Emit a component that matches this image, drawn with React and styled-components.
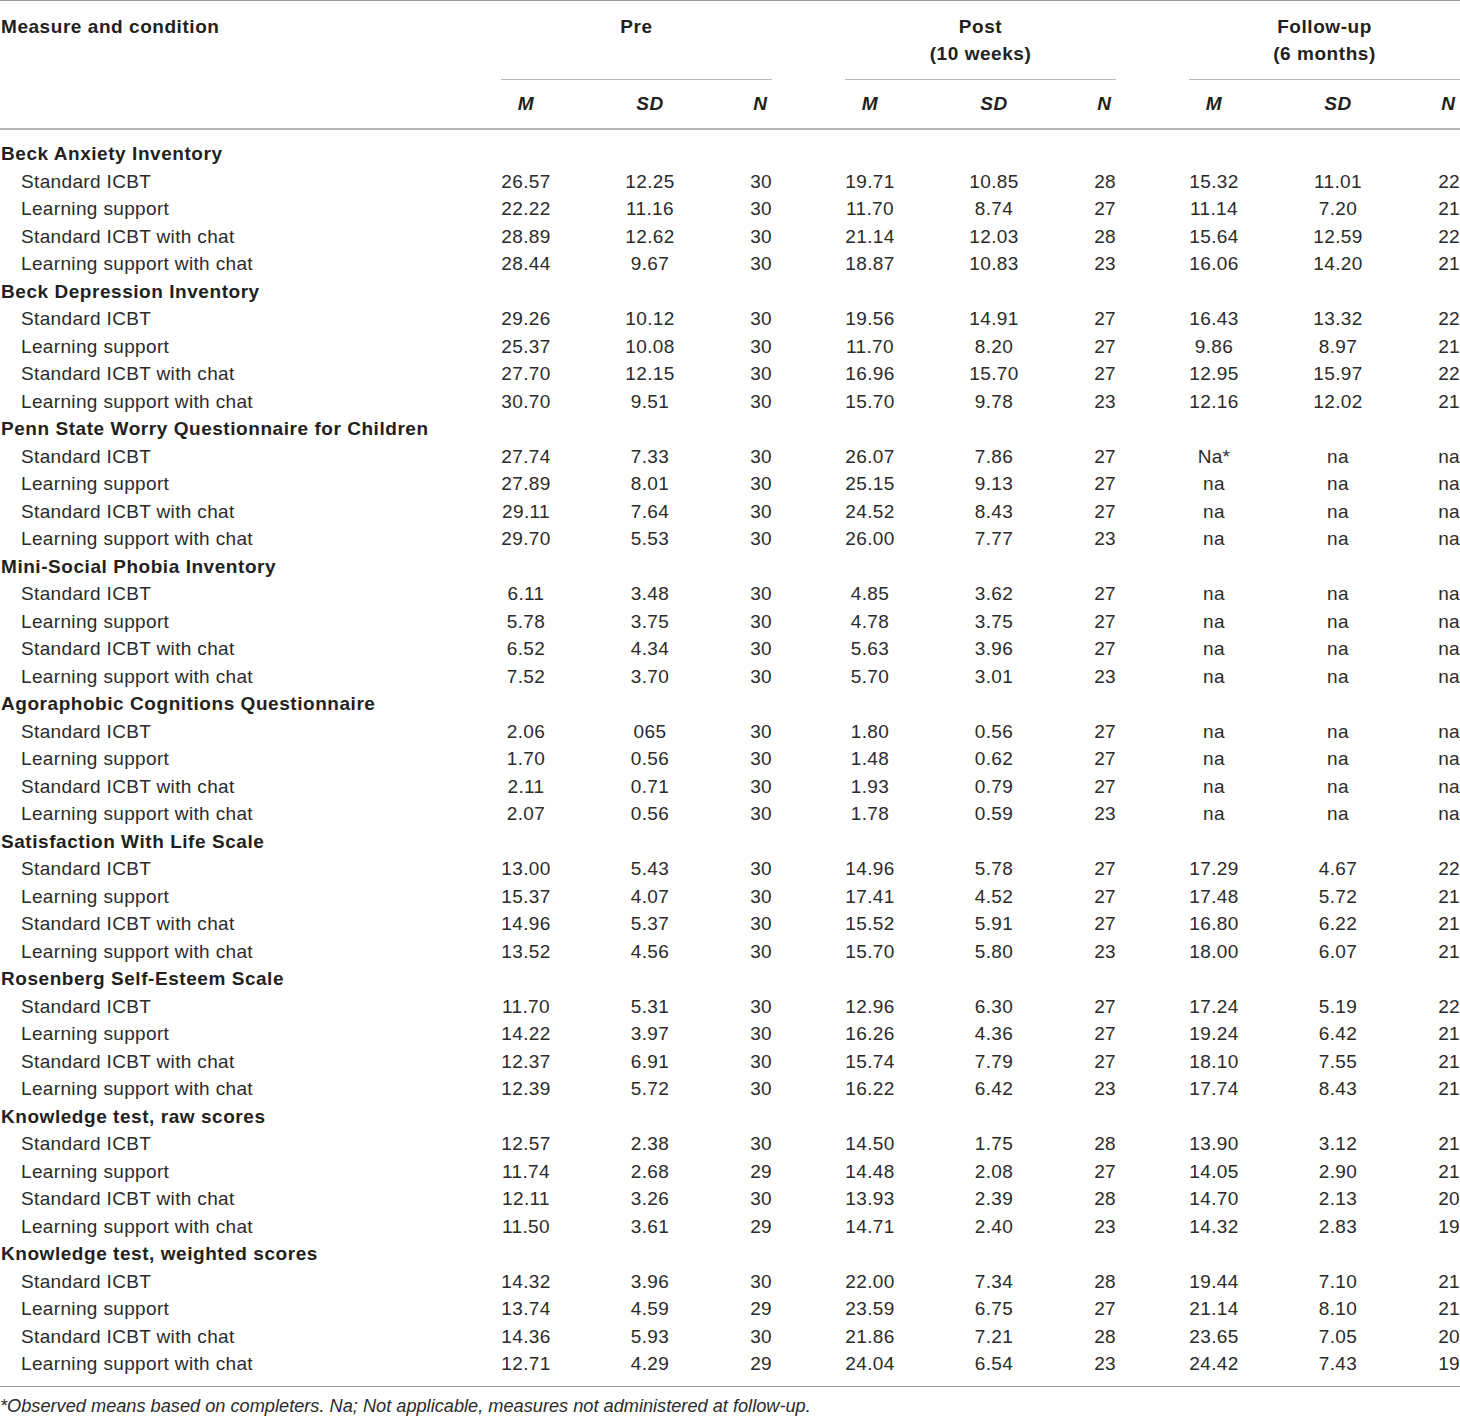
import styled, { createGlobalStyle } from 'styled-components'

const GlobalStyle = createGlobalStyle`
    html, body {
        margin: 0;
        padding: 0;
        background: #ffffff;
    }
    body {
        font-family: "Liberation Sans", Arial, Helvetica, sans-serif;
        color: #231f20;
    }
`

const COLUMNS = '501px 50px 198px 23px 73px 50px 198px 23px 73px 50px 198px 23px'

const Page = styled.div`
    width: 1460px;
`

const Table = styled.div`
    border-top: 1px solid #9a9a9a;
    border-bottom: 1px solid #9a9a9a;
`

const Head = styled.div`
    display: grid;
    grid-template-columns: ${COLUMNS};
    border-bottom: 2px solid #b4b4b4;
    font-size: 19px;
    font-weight: 700;
    letter-spacing: 0.55px;
    line-height: 27px;
`

const LabelHead = styled.div`
    grid-row: 1 / span 2;
    grid-column: 1;
    padding: 12px 0 0 1px;
`

const GroupHead = styled.div`
    grid-row: 1;
    grid-column: ${props => props.$col} / span 3;
    text-align: center;
    padding: 12px 0 12px;
    border-bottom: 1px solid #b9b9b9;
    height: 54px;
`

const SubHead = styled.div`
    grid-row: 2;
    grid-column: ${props => props.$col};
    text-align: center;
    font-style: italic;
    padding: 10px 0 11px;
`

const Body = styled.div`
    padding: 10px 0 8px;
`

const Row = styled.div`
    display: grid;
    grid-template-columns: ${COLUMNS};
    height: 27.5px;
    line-height: 27.5px;
    font-size: 19px;
    letter-spacing: 0.35px;
    white-space: nowrap;
`

const Measure = styled.div`
    grid-column: 1 / -1;
    font-weight: 700;
    letter-spacing: 0.55px;
    padding-left: 1px;
`

const Condition = styled.div`
    padding-left: 21px;
    color: #2b2b2b;
`

const Cell = styled.div`
    text-align: ${props => props.$align || 'center'};
    color: #2b2b2b;
`

const Spacer = styled.div``

const Note = styled.p`
    margin: 0;
    padding: 7px 0 0 0;
    font-size: 18.2px;
    font-style: italic;
    line-height: 24px;
    color: #2b2b2b;
`

const conditions = ['Standard ICBT', 'Learning support', 'Standard ICBT with chat', 'Learning support with chat']

const data = [
    ['Beck Anxiety Inventory', [
        ['26.57', '12.25', '30', '19.71', '10.85', '28', '15.32', '11.01', '22'],
        ['22.22', '11.16', '30', '11.70', '8.74', '27', '11.14', '7.20', '21'],
        ['28.89', '12.62', '30', '21.14', '12.03', '28', '15.64', '12.59', '22'],
        ['28.44', '9.67', '30', '18.87', '10.83', '23', '16.06', '14.20', '21'],
    ]],
    ['Beck Depression Inventory', [
        ['29.26', '10.12', '30', '19.56', '14.91', '27', '16.43', '13.32', '22'],
        ['25.37', '10.08', '30', '11.70', '8.20', '27', '9.86', '8.97', '21'],
        ['27.70', '12.15', '30', '16.96', '15.70', '27', '12.95', '15.97', '22'],
        ['30.70', '9.51', '30', '15.70', '9.78', '23', '12.16', '12.02', '21'],
    ]],
    ['Penn State Worry Questionnaire for Children', [
        ['27.74', '7.33', '30', '26.07', '7.86', '27', 'Na*', 'na', 'na'],
        ['27.89', '8.01', '30', '25.15', '9.13', '27', 'na', 'na', 'na'],
        ['29.11', '7.64', '30', '24.52', '8.43', '27', 'na', 'na', 'na'],
        ['29.70', '5.53', '30', '26.00', '7.77', '23', 'na', 'na', 'na'],
    ]],
    ['Mini-Social Phobia Inventory', [
        ['6.11', '3.48', '30', '4.85', '3.62', '27', 'na', 'na', 'na'],
        ['5.78', '3.75', '30', '4.78', '3.75', '27', 'na', 'na', 'na'],
        ['6.52', '4.34', '30', '5.63', '3.96', '27', 'na', 'na', 'na'],
        ['7.52', '3.70', '30', '5.70', '3.01', '23', 'na', 'na', 'na'],
    ]],
    ['Agoraphobic Cognitions Questionnaire', [
        ['2.06', '065', '30', '1.80', '0.56', '27', 'na', 'na', 'na'],
        ['1.70', '0.56', '30', '1.48', '0.62', '27', 'na', 'na', 'na'],
        ['2.11', '0.71', '30', '1.93', '0.79', '27', 'na', 'na', 'na'],
        ['2.07', '0.56', '30', '1.78', '0.59', '23', 'na', 'na', 'na'],
    ]],
    ['Satisfaction With Life Scale', [
        ['13.00', '5.43', '30', '14.96', '5.78', '27', '17.29', '4.67', '22'],
        ['15.37', '4.07', '30', '17.41', '4.52', '27', '17.48', '5.72', '21'],
        ['14.96', '5.37', '30', '15.52', '5.91', '27', '16.80', '6.22', '21'],
        ['13.52', '4.56', '30', '15.70', '5.80', '23', '18.00', '6.07', '21'],
    ]],
    ['Rosenberg Self-Esteem Scale', [
        ['11.70', '5.31', '30', '12.96', '6.30', '27', '17.24', '5.19', '22'],
        ['14.22', '3.97', '30', '16.26', '4.36', '27', '19.24', '6.42', '21'],
        ['12.37', '6.91', '30', '15.74', '7.79', '27', '18.10', '7.55', '21'],
        ['12.39', '5.72', '30', '16.22', '6.42', '23', '17.74', '8.43', '21'],
    ]],
    ['Knowledge test, raw scores', [
        ['12.57', '2.38', '30', '14.50', '1.75', '28', '13.90', '3.12', '21'],
        ['11.74', '2.68', '29', '14.48', '2.08', '27', '14.05', '2.90', '21'],
        ['12.11', '3.26', '30', '13.93', '2.39', '28', '14.70', '2.13', '20'],
        ['11.50', '3.61', '29', '14.71', '2.40', '23', '14.32', '2.83', '19'],
    ]],
    ['Knowledge test, weighted scores', [
        ['14.32', '3.96', '30', '22.00', '7.34', '28', '19.44', '7.10', '21'],
        ['13.74', '4.59', '29', '23.59', '6.75', '27', '21.14', '8.10', '21'],
        ['14.36', '5.93', '30', '21.86', '7.21', '28', '23.65', '7.05', '20'],
        ['12.71', '4.29', '29', '24.04', '6.54', '23', '24.42', '7.43', '19'],
    ]],
]

const groups = [
    { col: 2, title: ['Pre'] },
    { col: 6, title: ['Post', '(10 weeks)'] },
    { col: 10, title: ['Follow-up', '(6 months)'] },
]

const DataRow = ({ label, values }) => {
    const cells = []
    values.forEach((v, i) => {
        const pos = i % 3
        cells.push(<Cell key={i} $align={pos === 2 ? 'right' : 'center'}>{v}</Cell>)
        if (pos === 2 && i < 8) cells.push(<Spacer key={'s' + i} />)
    })
    return (
        <Row>
            <Condition>{label}</Condition>
            {cells}
        </Row>
    )
}

const App = () => {
    return (
        <Page>
            <GlobalStyle />
            <Table>
                <Head>
                    <LabelHead>Measure and condition</LabelHead>
                    {groups.map(g => (
                        <GroupHead key={g.col} $col={g.col}>
                            {g.title.map(t => <div key={t}>{t}</div>)}
                        </GroupHead>
                    ))}
                    {groups.map(g => [
                        <SubHead key={g.col + 'm'} $col={g.col}>M</SubHead>,
                        <SubHead key={g.col + 's'} $col={g.col + 1}>SD</SubHead>,
                        <SubHead key={g.col + 'n'} $col={g.col + 2}>N</SubHead>,
                    ])}
                </Head>
                <Body>
                    {data.map(([measure, rows]) => [
                        <Row key={measure}>
                            <Measure>{measure}</Measure>
                        </Row>,
                        ...rows.map((values, i) => (
                            <DataRow key={measure + i} label={conditions[i]} values={values} />
                        )),
                    ])}
                </Body>
            </Table>
            <Note>*Observed means based on completers. Na; Not applicable, measures not administered at follow-up.</Note>
        </Page>
    )
}

export default App
